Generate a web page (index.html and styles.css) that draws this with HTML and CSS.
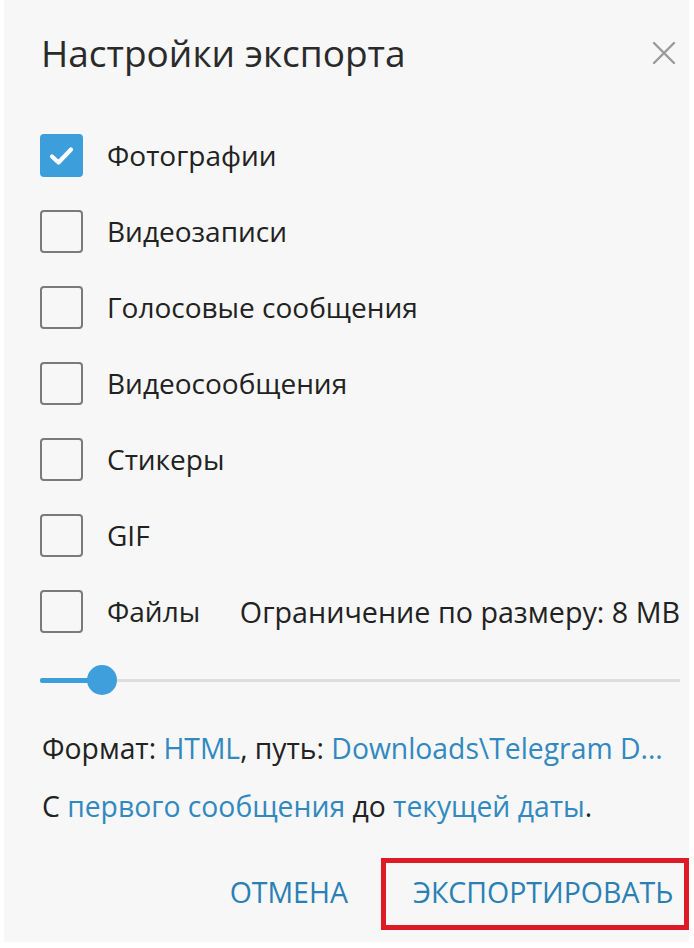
FILE: index.html
```html
<!DOCTYPE html>
<html lang="ru">
<head>
  <meta charset="UTF-8">
  <meta name="viewport" content="width=device-width, initial-scale=1.0">
  <title>Настройки экспорта</title>
  <link rel="stylesheet" href="styles.css">
</head>
<body>
  <div class="dialog">
    <header class="dialog-head">
      <h1>Настройки экспорта</h1>
      <button class="close" aria-label="Закрыть">
        <svg width="24" height="24" viewBox="0 0 24 24">
          <path d="M2 2 L22 22 M22 2 L2 22" stroke="#9a9a9a" stroke-width="2.4" stroke-linecap="round"/>
        </svg>
      </button>
    </header>

    <ul class="options">
      <li class="option">
        <span class="box checked">
          <svg width="43" height="43" viewBox="0 0 43 43">
            <path d="M12 22.5 L18.5 28.5 L31 15.5" fill="none" stroke="#fff" stroke-width="4.2" stroke-linecap="round" stroke-linejoin="round"/>
          </svg>
        </span>
        <span class="label">Фотографии</span>
      </li>
      <li class="option"><span class="box"></span><span class="label">Видеозаписи</span></li>
      <li class="option"><span class="box"></span><span class="label">Голосовые сообщения</span></li>
      <li class="option"><span class="box"></span><span class="label">Видеосообщения</span></li>
      <li class="option"><span class="box"></span><span class="label">Стикеры</span></li>
      <li class="option"><span class="box"></span><span class="label">GIF</span></li>
      <li class="option">
        <span class="box"></span>
        <span class="label">Файлы</span>
        <span class="limit">Ограничение по размеру: 8 MB</span>
      </li>
    </ul>

    <div class="slider">
      <div class="track"></div>
      <div class="fill"></div>
      <div class="thumb"></div>
    </div>

    <p class="info">Формат: <a href="#">HTML</a>, путь: <a href="#">Downloads\Telegram D...</a></p>
    <p class="info range">С <a href="#">первого сообщения</a> до <a href="#">текущей даты</a>.</p>

    <footer class="actions">
      <button class="btn">ОТМЕНА</button>
      <button class="btn export">ЭКСПОРТИРОВАТЬ</button>
    </footer>
  </div>
</body>
</html>
```

FILE: styles.css
```css
body {
  margin: 0;
  background: #fff;
  font-family: 'Open Sans', 'Noto Sans', sans-serif;
  color: #222;
}
.dialog {
  box-sizing: border-box;
  width: 685px;
  height: 942px;
  margin-left: 4px;
  padding: 30px 9px 0 36px;
  background: #f7f7f7;
}
.dialog-head {
  display: flex;
  align-items: center;
  justify-content: space-between;
  height: 46px;
}
.dialog-head h1 {
  margin: 0 0 0 1px;
  font-size: 37px;
  font-weight: 400;
  line-height: 46px;
  color: #2a2a2a;
}
.close {
  width: 24px;
  height: 24px;
  padding: 0;
  margin-right: 4px;
  border: none;
  background: none;
  display: flex;
}
.options {
  list-style: none;
  margin: 41px 0 0;
  padding: 0;
}
.option {
  display: flex;
  align-items: center;
  height: 76px;
  font-size: 28px;
}
.box {
  box-sizing: border-box;
  width: 43px;
  height: 43px;
  border: 2px solid #7a7a7a;
  border-radius: 4px;
  flex-shrink: 0;
  display: flex;
}
.box.checked {
  border: none;
  background: #3d9edc;
}
.label {
  margin-left: 24px;
}
.limit {
  margin-left: auto;
  font-size: 28.7px;
}
.slider {
  position: relative;
  height: 30px;
  margin-top: 16px;
}
.track {
  position: absolute;
  left: 0;
  right: 0;
  top: 14px;
  height: 3px;
  background: #dedede;
}
.fill {
  position: absolute;
  left: 0;
  width: 62px;
  top: 13px;
  height: 5px;
  background: #3d9edc;
  border-radius: 2px;
}
.thumb {
  position: absolute;
  left: 47px;
  top: 0;
  width: 30px;
  height: 30px;
  border-radius: 50%;
  background: #3e9fdc;
}
.info {
  margin: 33px 0 0 2px;
  font-size: 28.3px;
  line-height: 40px;
  white-space: nowrap;
}
.info.range {
  margin-top: 18px;
}
.info a {
  color: #3189bf;
  text-decoration: none;
}
.actions {
  display: flex;
  justify-content: flex-end;
  align-items: center;
  gap: 33px;
  margin: 32px -9px 0 0;
}
.btn {
  border: none;
  background: none;
  font-family: inherit;
  font-size: 28.5px;
  font-weight: 400;
  color: #2a80b4;
  padding: 0 0 5px;
  height: 72px;
}
.export {
  box-sizing: border-box;
  width: 308px;
  border: 5px solid #dd1a26;
  padding: 0 11px 5px 27px;
  text-align: left;
}
```
